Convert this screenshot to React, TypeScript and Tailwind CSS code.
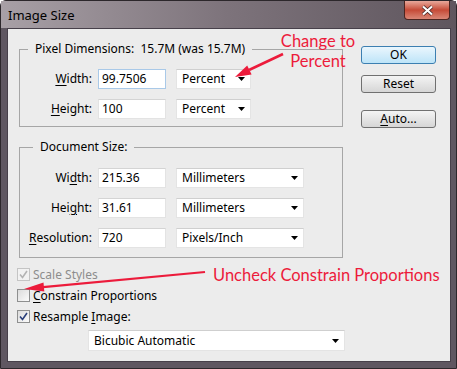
import React from 'react';

// Photoshop "Image Size" dialog with red annotations

const Caret = () => (
  <svg width="7" height="4" viewBox="0 0 7 4" className="shrink-0">
    <path d="M0 0h7L3.5 4z" fill="#000" />
  </svg>
);

const Check = ({ checked, disabled }: { checked?: boolean; disabled?: boolean }) => (
  <div
    className={
      'w-[13px] h-[13px] border flex items-center justify-center shrink-0 ' +
      (disabled
        ? 'border-[#c4c4c4] bg-[#f2f2f2]'
        : 'border-[#8e8f8f] bg-gradient-to-br from-[#dcdcdc] to-[#fbfbfb]')
    }
  >
    {checked && (
      <svg width="9" height="9" viewBox="0 0 9 9">
        <path
          d="M1 4.5 L3.5 7.5 L8 1"
          fill="none"
          stroke={disabled ? '#b3b3b3' : '#2a3f7a'}
          strokeWidth="1.6"
        />
      </svg>
    )}
  </div>
);

const Field = ({ value, focused }: { value: string; focused?: boolean }) => (
  <div
    className={
      'w-[68px] h-[20px] ml-[6px] bg-white border flex items-center pl-[3px] ' +
      (focused ? 'border-[#a9c9e8]' : 'border-[#e3e3e3] border-t-[#d4d4d4]')
    }
  >
    {value}
  </div>
);

const Select = ({ value, className }: { value: string; className: string }) => (
  <div
    className={
      'h-[20px] bg-white border border-[#e4e4e4] border-t-[#cfcfcf] flex items-center justify-between pl-[5px] pr-[5px] ' +
      className
    }
  >
    <span>{value}</span>
    <Caret />
  </div>
);

const Button = ({ children, primary, className }: { children: React.ReactNode; primary?: boolean; className: string }) => (
  <div
    className={
      'w-[75px] h-[18px] rounded-[3px] border flex items-center justify-center ' +
      (primary
        ? 'border-[#3c7fb1] bg-gradient-to-b from-[#eaf6fd] to-[#bde4f8] '
        : 'border-[#707070] bg-gradient-to-b from-[#f4f4f4] to-[#d6d6d6] ') +
      className
    }
  >
    {children}
  </div>
);

export default function App() {
  return (
    <div className="w-[457px] h-[369px] relative overflow-hidden font-['Noto_Sans',sans-serif] text-[12px] leading-[16px] text-black">
      <div className="w-full h-full border border-[#2c272b] rounded-t-[6px] bg-[#5f5761] flex flex-col">
        {/* title bar */}
        <div className="h-[27px] flex items-start bg-gradient-to-r from-[#a8a0a6] via-[#7d737b] to-[#5f565e]">
          <div className="pl-[7px] pt-[6px] text-[13px] leading-[16px] text-black">Image Size</div>
          <div className="ml-auto mr-[6px] w-[46px] h-[19px] rounded-b-[4px] border border-t-0 border-[#4b2520] bg-gradient-to-b from-[#e7a89b] via-[#c54a37] to-[#d98676] flex items-center justify-center">
            <svg width="13" height="11" viewBox="0 0 13 11">
              <path d="M2 1.5 L11 9.5 M11 1.5 L2 9.5" stroke="#3a2020" strokeWidth="3.6" />
              <path d="M2 1.5 L11 9.5 M11 1.5 L2 9.5" stroke="#fff" strokeWidth="2.2" />
            </svg>
          </div>
        </div>

        {/* client area */}
        <div className="ml-[6px] w-[444px] h-[334px] border border-[#47404a] bg-[#ececec] flex">
          <div className="ml-[11px] w-[324px] flex flex-col pt-[12px]">
            <fieldset className="border border-[#a6a6a6] pt-[12px] pb-[7px]">
              <legend className="ml-[8px] px-[7px]">Pixel Dimensions:&nbsp; 15.7M (was 15.7M)</legend>
              <div className="flex items-center h-[20px]">
                <div className="w-[72px] text-right">
                  <span className="underline underline-offset-[2px]">W</span>idth:
                </div>
                <Field value="99.7506" focused />
                <Select value="Percent" className="ml-[10px] w-[75px]" />
              </div>
              <div className="flex items-center h-[20px] mt-[10px]">
                <div className="w-[72px] text-right">
                  <span className="underline underline-offset-[2px]">H</span>eight:
                </div>
                <Field value="100" />
                <Select value="Percent" className="ml-[10px] w-[75px]" />
              </div>
            </fieldset>

            <fieldset className="border border-[#a6a6a6] mt-[12px] pt-[13px] pb-[9px]">
              <legend className="ml-[13px] px-[7px]">Document Size:</legend>
              <div className="flex items-center h-[20px]">
                <div className="w-[72px] text-right">
                  Wi<span className="underline underline-offset-[2px]">d</span>th:
                </div>
                <Field value="215.36" />
                <Select value="Millimeters" className="ml-[10px] w-[128px]" />
              </div>
              <div className="flex items-center h-[20px] mt-[10px]">
                <div className="w-[72px] text-right">
                  Hei<span className="underline underline-offset-[2px]">g</span>ht:
                </div>
                <Field value="31.61" />
                <Select value="Millimeters" className="ml-[10px] w-[128px]" />
              </div>
              <div className="flex items-center h-[20px] mt-[10px]">
                <div className="w-[72px] text-right">
                  <span className="underline underline-offset-[2px]">R</span>esolution:
                </div>
                <Field value="720" />
                <Select value="Pixels/Inch" className="ml-[10px] w-[128px]" />
              </div>
            </fieldset>

            <div className="mt-[6px] -ml-[2px] flex flex-col">
              <div className="h-[21px] flex items-center gap-[3px]">
                <Check checked disabled />
                <span className="text-[#8c8c8c]">Scale Styles</span>
              </div>
              <div className="h-[21px] flex items-center gap-[3px]">
                <Check />
                <span>
                  <span className="underline underline-offset-[2px]">C</span>onstrain Proportions
                </span>
              </div>
              <div className="h-[21px] flex items-center gap-[3px]">
                <Check checked />
                <span>
                  Resample <span className="underline underline-offset-[2px]">I</span>mage:
                </span>
              </div>
            </div>
            <Select value="Bicubic Automatic" className="mt-[3px] ml-[69px] w-[257px] h-[21px]" />
          </div>

          <div className="ml-[18px] flex flex-col pt-[17px]">
            <Button primary className="">OK</Button>
            <Button className="mt-[11px]">Reset</Button>
            <Button className="mt-[17px]">
              <span>
                <span className="underline underline-offset-[2px]">A</span>uto...
              </span>
            </Button>
          </div>
        </div>
      </div>

      {/* annotations */}
      <div className="absolute left-[276px] top-[31px] w-[84px] text-center font-['Lato',sans-serif] text-[16.5px] leading-[20px] text-[#ec1b3b]">
        Change to
        <br />
        Percent
      </div>
      <div className="absolute left-[213px] top-[265px] font-['Lato',sans-serif] text-[16.5px] leading-[20px] text-[#ec1b3b] whitespace-nowrap">
        Uncheck Constrain Proportions
      </div>
      <svg className="absolute left-0 top-0 pointer-events-none" width="457" height="369">
        <line x1="283" y1="54" x2="249" y2="70" stroke="#ec1b3b" strokeWidth="2.5" />
        <polygon points="235,77 251.6,74.6 247.2,65.6" fill="#ec1b3b" />
        <line x1="205" y1="272" x2="43" y2="287.1" stroke="#ec1b3b" strokeWidth="2.2" />
        <polygon points="24,289 44.3,291.6 43.5,282.6" fill="#ec1b3b" />
      </svg>
    </div>
  );
}
